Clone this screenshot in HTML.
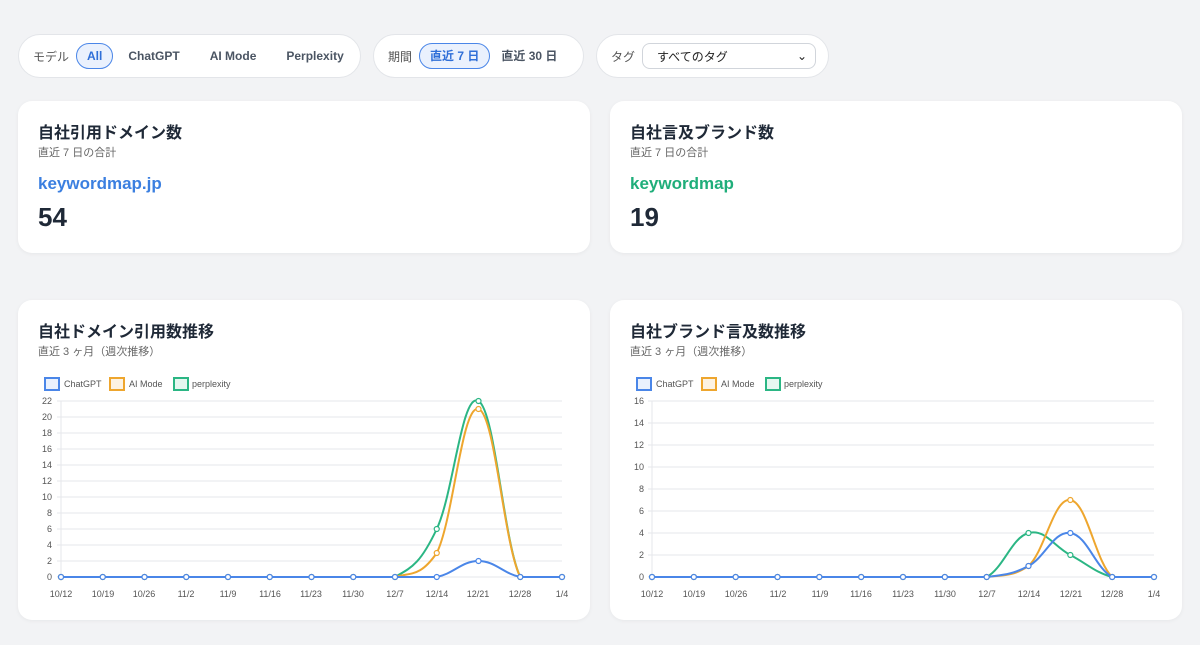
<!DOCTYPE html>
<html><head><meta charset="utf-8">
<style>
*{box-sizing:border-box;margin:0;padding:0}
body{width:1200px;height:645px;background:#f2f3f5;font-family:"Liberation Sans","Noto Sans CJK JP",sans-serif;color:#1f2937;position:relative;overflow:hidden}
.pill{position:absolute;top:34px;height:44px;background:#fff;border:1px solid #e3e5e9;border-radius:22px;display:flex;align-items:center;padding:0 14px;font-size:12px;color:#555;white-space:nowrap}
.pill>*{flex-shrink:0}
.pill span{margin-right:7px}
.b{font-weight:bold;color:#4b5563;padding:0 14px;height:26px;line-height:24px;border-radius:13px;border:1px solid transparent}
.b.on{border-color:#4a86e8;background:#eaf1fd;color:#2f6fd8}
.sel{width:174px;height:26px;border:1px solid #d1d5db;border-radius:8px;display:flex;align-items:center;justify-content:space-between;padding:0 8px 0 14px;color:#222;font-size:12px}
.card{position:absolute;background:#fff;border-radius:14px;box-shadow:0 1px 4px rgba(0,0,0,.05)}
.t{position:absolute;left:20px;top:18px;font-size:16px;font-weight:bold;color:#1f2937}
.s{position:absolute;left:20px;top:43px;font-size:11px;color:#666}
.d{position:absolute;left:20px;top:73px;font-size:17px;font-weight:bold}
.n{position:absolute;left:20px;top:101px;font-size:26px;font-weight:bold;color:#1f2937}
svg text{font-family:"Liberation Sans",sans-serif;font-size:9px;fill:#555}
</style></head><body>
<div class="pill" style="left:18px;width:343px"><span>モデル</span><div class="b on" style="padding:0 10px">All</div><div class="b">ChatGPT</div><div class="b">AI Mode</div><div class="b">Perplexity</div></div>
<div class="pill" style="left:373px;width:211px"><span>期間</span><div class="b on" style="padding:0 10px">直近 7 日</div><div class="b" style="padding:0 10px">直近 30 日</div></div>
<div class="pill" style="left:596px;width:233px"><span>タグ</span><div class="sel">すべてのタグ<span style="margin:0">⌄</span></div></div>

<div class="card" style="left:18px;top:101px;width:572px;height:152px"><div class="t">自社引用ドメイン数</div><div class="s">直近 7 日の合計</div><div class="d" style="color:#3b7fe0">keywordmap.jp</div><div class="n">54</div></div>
<div class="card" style="left:610px;top:101px;width:572px;height:152px"><div class="t">自社言及ブランド数</div><div class="s">直近 7 日の合計</div><div class="d" style="color:#1fae7a">keywordmap</div><div class="n">19</div></div>

<div class="card" style="left:18px;top:300px;width:572px;height:320px"><div class="t">自社ドメイン引用数推移</div><div class="s">直近 3 ヶ月（週次推移）</div></div>
<div class="card" style="left:610px;top:300px;width:572px;height:320px"><div class="t">自社ブランド言及数推移</div><div class="s">直近 3 ヶ月（週次推移）</div></div>

<svg id="c1" style="position:absolute;left:0;top:0" width="1200" height="645">
<g>
<text x="52" y="404" text-anchor="end">22</text><text x="52" y="420" text-anchor="end">20</text><text x="52" y="436" text-anchor="end">18</text><text x="52" y="452" text-anchor="end">16</text><text x="52" y="468" text-anchor="end">14</text><text x="52" y="484" text-anchor="end">12</text><text x="52" y="500" text-anchor="end">10</text><text x="52" y="516" text-anchor="end">8</text><text x="52" y="532" text-anchor="end">6</text><text x="52" y="548" text-anchor="end">4</text><text x="52" y="564" text-anchor="end">2</text><text x="52" y="580" text-anchor="end">0</text>
</g>
<g>
<text x="644" y="404" text-anchor="end">16</text><text x="644" y="426" text-anchor="end">14</text><text x="644" y="448" text-anchor="end">12</text><text x="644" y="470" text-anchor="end">10</text><text x="644" y="492" text-anchor="end">8</text><text x="644" y="514" text-anchor="end">6</text><text x="644" y="536" text-anchor="end">4</text><text x="644" y="558" text-anchor="end">2</text><text x="644" y="580" text-anchor="end">0</text>
</g>
<text x="61" y="597" text-anchor="middle">10/12</text><text x="103" y="597" text-anchor="middle">10/19</text><text x="144" y="597" text-anchor="middle">10/26</text><text x="186" y="597" text-anchor="middle">11/2</text><text x="228" y="597" text-anchor="middle">11/9</text><text x="270" y="597" text-anchor="middle">11/16</text><text x="311" y="597" text-anchor="middle">11/23</text><text x="353" y="597" text-anchor="middle">11/30</text><text x="395" y="597" text-anchor="middle">12/7</text><text x="437" y="597" text-anchor="middle">12/14</text><text x="478" y="597" text-anchor="middle">12/21</text><text x="520" y="597" text-anchor="middle">12/28</text><text x="562" y="597" text-anchor="middle">1/4</text>
<text x="652" y="597" text-anchor="middle">10/12</text><text x="694" y="597" text-anchor="middle">10/19</text><text x="736" y="597" text-anchor="middle">10/26</text><text x="778" y="597" text-anchor="middle">11/2</text><text x="820" y="597" text-anchor="middle">11/9</text><text x="861" y="597" text-anchor="middle">11/16</text><text x="903" y="597" text-anchor="middle">11/23</text><text x="945" y="597" text-anchor="middle">11/30</text><text x="987" y="597" text-anchor="middle">12/7</text><text x="1029" y="597" text-anchor="middle">12/14</text><text x="1071" y="597" text-anchor="middle">12/21</text><text x="1112" y="597" text-anchor="middle">12/28</text><text x="1154" y="597" text-anchor="middle">1/4</text>
<g>
<rect x="45" y="378" width="14" height="12" fill="#eaf1fd" stroke="#4a86e8" stroke-width="2"/><text x="64" y="387">ChatGPT</text>
<rect x="110" y="378" width="14" height="12" fill="#fdf3e3" stroke="#eea62e" stroke-width="2"/><text x="129" y="387">AI Mode</text>
<rect x="174" y="378" width="14" height="12" fill="#e6f7f0" stroke="#2bb684" stroke-width="2"/><text x="192" y="387">perplexity</text>
<rect x="637" y="378" width="14" height="12" fill="#eaf1fd" stroke="#4a86e8" stroke-width="2"/><text x="656" y="387">ChatGPT</text>
<rect x="702" y="378" width="14" height="12" fill="#fdf3e3" stroke="#eea62e" stroke-width="2"/><text x="721" y="387">AI Mode</text>
<rect x="766" y="378" width="14" height="12" fill="#e6f7f0" stroke="#2bb684" stroke-width="2"/><text x="784" y="387">perplexity</text>
</g>
<g id="plots"></g>
</svg>
<script>
var ns="http://www.w3.org/2000/svg",P=document.getElementById("plots");
function el(t,a){var e=document.createElementNS(ns,t);for(var k in a)e.setAttribute(k,a[k]);P.appendChild(e);return e}
function chart(x0,x1,y0,yT,max,series){
 var st=(x1-x0)/12,u=(y0-yT)/max;
 for(var v=0;v<=max;v+=2){var y=y0-v*u;el("line",{x1:x0-4,x2:x1,y1:y,y2:y,stroke:"#e5e7eb","stroke-width":1})}
 el("line",{x1:x0,x2:x0,y1:yT,y2:y0+4,stroke:"#e5e7eb"});
 series.forEach(function(s){
  var pts=s.d.map(function(v,i){return [x0+i*st,y0-v*u]});
  var d="M"+pts[0][0]+","+pts[0][1];
  for(var i=0;i<pts.length-1;i++){
   var p0=pts[Math.max(0,i-1)],p1=pts[i],p2=pts[i+1],p3=pts[Math.min(pts.length-1,i+2)],t=0.2;
   var c1=[p1[0]+(p2[0]-p0[0])*t,p1[1]+(p2[1]-p0[1])*t],c2=[p2[0]-(p3[0]-p1[0])*t,p2[1]-(p3[1]-p1[1])*t];
   c1[1]=Math.min(c1[1],y0);c2[1]=Math.min(c2[1],y0);
   d+=" C"+c1+" "+c2+" "+p2;
  }
  el("path",{d:d,fill:"none",stroke:s.c,"stroke-width":2});
  pts.forEach(function(p){el("circle",{cx:p[0],cy:p[1],r:2.5,fill:"#fff",stroke:s.c,"stroke-width":1.2})});
 });
}
var z=[0,0,0,0,0,0,0,0,0];
chart(61,562,577,401,22,[
 {c:"#2bb684",d:z.concat([6,22,0,0])},
 {c:"#eea62e",d:z.concat([3,21,0,0])},
 {c:"#4a86e8",d:z.concat([0,2,0,0])}]);
chart(652,1154,577,401,16,[
 {c:"#2bb684",d:z.concat([4,2,0,0])},
 {c:"#eea62e",d:z.concat([1,7,0,0])},
 {c:"#4a86e8",d:z.concat([1,4,0,0])}]);
</script>
</body></html>
